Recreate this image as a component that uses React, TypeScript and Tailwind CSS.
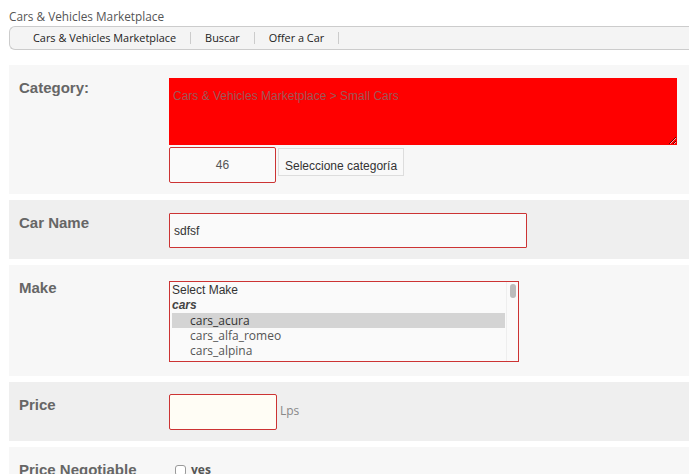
import React from 'react';

const sans = { fontFamily: '"Liberation Sans", Arial, sans-serif' };

function Row({ label, bg, fieldClass, children }: { label: string; bg: string; fieldClass: string; children: React.ReactNode }) {
  return (
    <div className={`flex ${bg}`}>
      <div className="w-[160px] shrink-0 pl-[10px] pt-[14px] text-[15px] leading-[18px] font-bold text-[#666]" style={sans}>
        {label}
      </div>
      <div className={`flex-1 ${fieldClass}`}>{children}</div>
    </div>
  );
}

export default function App() {
  const tabs = ['Cars & Vehicles Marketplace', 'Buscar', 'Offer a Car'];

  return (
    <div className="min-h-screen bg-white pl-[9px] pt-[8px] overflow-hidden" style={{ fontFamily: '"Open Sans", sans-serif' }}>
      <div className="text-[11.8px] leading-[16px] text-[#555]">Cars &amp; Vehicles Marketplace</div>

      {/* nav bar */}
      <div className="mt-[2px] h-[24px] flex items-center bg-[#f4f4f4] border border-r-0 border-[#ccc] rounded-l-[6px] pl-[23px]">
        {tabs.map(t => (
          <div key={t} className="flex items-center">
            <span className="text-[10.9px] text-[#222]">{t}</span>
            <span className="mx-[14px] w-px h-[12px] bg-[#ccc]" />
          </div>
        ))}
      </div>

      <div className="mt-[15px] flex flex-col gap-[6px]">
        {/* Category */}
        <Row label="Category:" bg="bg-[#f7f7f7]" fieldClass="pt-[13px] pb-[11px] pr-[12px]">
          <textarea
            readOnly
            value="Cars & Vehicles Marketplace > Small Cars"
            className="block w-full h-[67px] bg-[#ff0000] px-[4px] pt-[11px] text-[12px] leading-[15px] text-[#9c5858] outline-none"
            style={sans}
          />
          <div className="mt-[2px] flex items-start gap-[2px]">
            <input
              readOnly
              defaultValue="46"
              className="w-[107px] h-[36px] rounded-[2px] border border-[#c33] bg-[#fafafa] text-center text-[12px] text-[#555] outline-none"
              style={sans}
            />
            <button className="mt-[1px] h-[28px] px-[6px] pt-[10px] leading-[15px] border border-[#ddd] bg-[#f9f9f9] text-[12px] text-[#333] flex items-start" style={sans}>
              Seleccione categoría
            </button>
          </div>
        </Row>

        {/* Car Name */}
        <Row label="Car Name" bg="bg-[#efefef]" fieldClass="pt-[13px] pb-[11px]">
          <input
            readOnly
            defaultValue="sdfsf"
            className="block w-[358px] h-[35px] border border-[#c33] rounded-[1px] bg-[#fafafa] px-[4px] text-[12px] text-[#333] outline-none"
            style={sans}
          />
        </Row>

        {/* Make */}
        <Row label="Make" bg="bg-[#f7f7f7]" fieldClass="pt-[16px] pb-[14px]">
          <div className="relative w-[350px] h-[81px] border border-[#c33] bg-[#fafafa] overflow-hidden">
            <div className="pl-[2px] pr-[13px] pt-[1px]">
              <div className="h-[15px] leading-[15px] text-[12px] text-[#333]" style={sans}>Select Make</div>
              <div className="h-[15px] leading-[15px] text-[12px] font-bold italic text-[#444]" style={sans}>cars</div>
              <div className="h-[15px] leading-[15px] text-[12px] text-[#333] bg-[#d4d4d4] pl-[18px]">cars_acura</div>
              <div className="h-[15px] leading-[15px] text-[12px] text-[#555] pl-[18px]">cars_alfa_romeo</div>
              <div className="h-[15px] leading-[15px] text-[12px] text-[#555] pl-[18px]">cars_alpina</div>
            </div>
            <div className="absolute right-0 top-0 bottom-0 w-[12px] border-l border-[#eee] bg-[#fafafa]">
              <div className="mx-auto mt-[2px] w-[6px] h-[14px] rounded-full bg-[#bbb]" />
            </div>
          </div>
        </Row>

        {/* Price */}
        <Row label="Price" bg="bg-[#efefef]" fieldClass="pt-[12px] pb-[11px] flex items-end">
          <input
            readOnly
            className="block w-[108px] h-[36px] border border-[#c33] rounded-[2px] bg-[#fffdf5] outline-none"
          />
          <span className="ml-[3px] mb-[10px] text-[12px] text-[#888]">Lps</span>
        </Row>

        {/* Price Negotiable */}
        <Row label="Price Negotiable" bg="bg-[#f7f7f7]" fieldClass="pt-[14px] pb-[12px]">
          <label className="flex items-center gap-[5px] pl-[6px]">
            <span className="w-[11px] h-[11px] rounded-[3px] border border-[#999] bg-white" />
            <span className="text-[12px] font-bold text-[#555]">yes</span>
          </label>
        </Row>
      </div>
    </div>
  );
}
